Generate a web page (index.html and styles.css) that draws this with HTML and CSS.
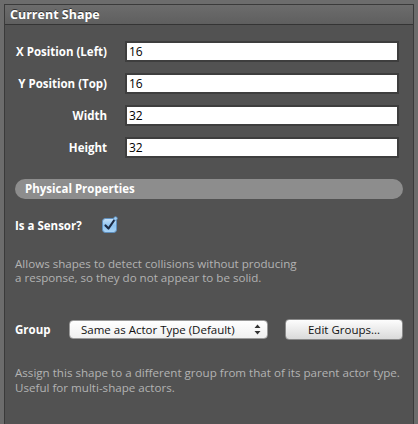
FILE: index.html
```html
<!DOCTYPE html>
<html>
<head>
<meta charset="utf-8">
<link rel="stylesheet" href="styles.css">
</head>
<body>
<div class="panel">
  <div class="header">Current Shape</div>
  <div class="body">
    <div class="form">
      <label class="lbl">X Position (Left)</label><div class="input">16</div>
      <label class="lbl">Y Position (Top)</label><div class="input">16</div>
      <label class="lbl">Width</label><div class="input">32</div>
      <label class="lbl">Height</label><div class="input">32</div>
    </div>
    <div class="pill">Physical Properties</div>
    <div class="sensor">
      <span class="lbl sensor-lbl">Is a Sensor?</span>
      <span class="check">
        <svg width="18" height="18" viewBox="0 0 18 18">
          <defs>
            <linearGradient id="cg" x1="0" y1="0" x2="0" y2="1">
              <stop offset="0" stop-color="#c6e2fb"/>
              <stop offset="0.5" stop-color="#8fc3ef"/>
              <stop offset="1" stop-color="#a9d4f7"/>
            </linearGradient>
          </defs>
          <rect x="1.5" y="2.5" width="14" height="14" rx="3" fill="url(#cg)" stroke="#5e8fbf" stroke-width="1"/>
          <path d="M4.5 9.5 L7.5 12.5 L13 4.5" fill="none" stroke="#1b2a44" stroke-width="2.2" stroke-linecap="round" stroke-linejoin="round"/>
          <circle cx="14.5" cy="2.5" r="1.8" fill="#9fcdf3" stroke="#5e8fbf" stroke-width="0.8"/>
        </svg>
      </span>
    </div>
    <p class="desc">Allows shapes to detect collisions without producing<br>a response, so they do not appear to be solid.</p>
    <div class="group">
      <span class="lbl">Group</span>
      <div class="select"><span>Same as Actor Type (Default)</span>
        <svg class="arrows" width="7" height="11" viewBox="0 0 7 11"><path d="M0.5 4 L3.5 0.5 L6.5 4 Z M0.5 7 L3.5 10.5 L6.5 7 Z" fill="#333"/></svg>
      </div>
      <div class="button">Edit Groups...</div>
    </div>
    <p class="desc desc2">Assign this shape to a different group from that of its parent actor type.<br>Useful for multi-shape actors.</p>
  </div>
</div>
</body>
</html>
```
FILE: styles.css
```css
html, body {
  margin: 0;
  padding: 0;
}
body {
  background: #6c6c6c;
  width: 418px;
  height: 424px;
  overflow: hidden;
  font-family: "Open Sans", "DejaVu Sans", sans-serif;
  font-size: 11.5px;
}
.panel {
  margin: 4px 0 0 4px;
  width: 408px;
  height: 430px;
  background: #525252;
  border: 1px solid #3a3a3a;
  border-bottom: none;
}
.header {
  height: 19px;
  line-height: 19px;
  padding-left: 5px;
  background: linear-gradient(#6c6c6c, #5f5f5f);
  border-bottom: 1px solid #343434;
  color: #fff;
  font-weight: bold;
  font-size: 12.5px;
  text-shadow: 0 -1px 0 #333;
}
.body {
  padding: 16px 10px 0 10px;
}
.form {
  display: grid;
  grid-template-columns: 92px 274px;
  column-gap: 18px;
  row-gap: 11px;
  align-items: center;
}
.lbl {
  color: #fff;
  font-weight: bold;
  font-size: 11.5px;
}
.form .lbl {
  text-align: right;
}
.input {
  height: 17px;
  line-height: 17px;
  background: #fff;
  border: 2px solid #3e3e3e;
  padding-left: 2px;
  color: #000;
  font-size: 12px;
}
.pill {
  margin-top: 21px;
  height: 20px;
  line-height: 20px;
  border-radius: 10px;
  background: #8d8d8d;
  color: #fff;
  font-weight: bold;
  padding-left: 10px;
}
.sensor {
  margin-top: 16px;
  display: flex;
  align-items: center;
  height: 20px;
}
.sensor-lbl {
  width: 86px;
}
.check {
  display: block;
  width: 18px;
  height: 18px;
}
.check svg { display: block; }
.desc {
  margin: 22px 0 0 0;
  color: #b3b3b3;
  line-height: 14px;
  font-size: 11.6px;
}
.group {
  margin-top: 34px;
  display: flex;
  align-items: center;
  height: 21px;
}
.group .lbl {
  width: 54px;
}
.select {
  box-sizing: border-box;
  width: 199px;
  height: 19px;
  border-radius: 4px;
  background: linear-gradient(#ffffff, #f0f0f0);
  border: 1px solid #9a9a9a;
  display: flex;
  align-items: center;
  justify-content: space-between;
  padding: 0 6px 0 11px;
  color: #111;
  font-size: 11.5px;
}
.arrows { display: block; }
.button {
  box-sizing: border-box;
  margin-left: 17px;
  width: 118px;
  height: 21px;
  border-radius: 4px;
  background: linear-gradient(#fdfdfd, #dadada);
  border: 1px solid #8a8a8a;
  display: flex;
  align-items: center;
  justify-content: center;
  color: #111;
  font-size: 11.5px;
}
.desc2 {
  margin-top: 25px;
  line-height: 15px;
}
```
